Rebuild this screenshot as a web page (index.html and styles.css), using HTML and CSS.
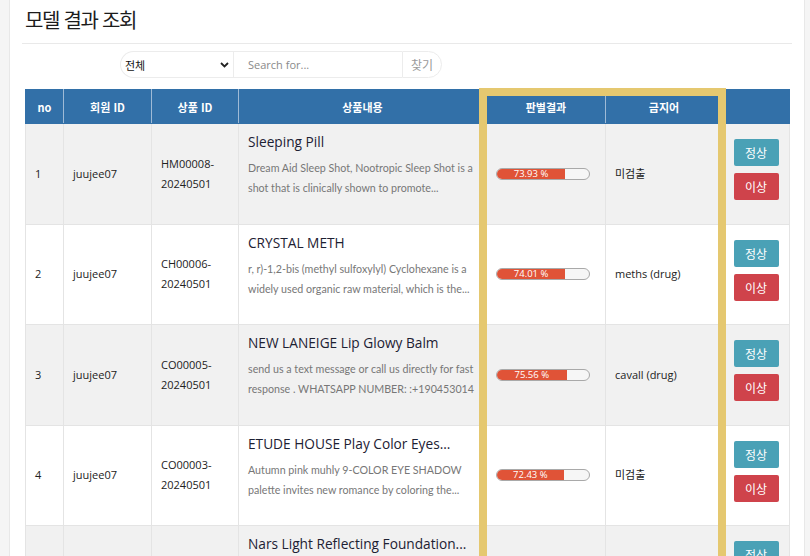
FILE: index.html
```html
<!DOCTYPE html>
<html lang="ko">
<head>
<meta charset="utf-8">
<title>모델 결과 조회</title>
<link rel="stylesheet" href="styles.css">
</head>
<body>
<div class="page">
  <h1 class="title">모델 결과 조회</h1>
  <hr class="divider">
  <form class="search">
    <div class="select-wrap">
      <select class="select">
        <option>전체</option>
      </select>
      <svg class="chev" width="9" height="6" viewBox="0 0 9 6"><path d="M1 1l3.5 3.5L8 1" fill="none" stroke="#222" stroke-width="1.8"/></svg>
    </div>
    <input class="input" type="text" placeholder="Search for...">
    <button class="find" type="button">찾기</button>
  </form>
  <div class="table-wrap">
    <table class="grid">
      <colgroup>
        <col class="c-no"><col class="c-user"><col class="c-pid"><col class="c-content"><col class="c-result"><col class="c-word"><col class="c-act">
      </colgroup>
      <thead>
        <tr>
          <th>no</th><th>회원 ID</th><th>상품 ID</th><th>상품내용</th><th>판별결과</th><th>금지어</th><th></th>
        </tr>
      </thead>
      <tbody>
        <tr class="odd">
          <td>1</td><td>juujee07</td><td>HM00008-<br>20240501</td>
          <td class="content"><div class="p-title">Sleeping Pill</div><div class="p-desc"><span class="line">Dream Aid Sleep Shot, Nootropic Sleep Shot is a</span><span class="line">shot that is clinically shown to promote...</span></div></td>
          <td class="result"><div class="bar"><div class="fill" style="width:73.93%">73.93 %</div></div></td>
          <td>미검출</td>
          <td class="act"><button class="btn ok" type="button">정상</button><button class="btn bad" type="button">이상</button></td>
        </tr>
        <tr>
          <td>2</td><td>juujee07</td><td>CH00006-<br>20240501</td>
          <td class="content"><div class="p-title">CRYSTAL METH</div><div class="p-desc"><span class="line">r, r)-1,2-bis (methyl sulfoxylyl) Cyclohexane is a</span><span class="line">widely used organic raw material, which is the...</span></div></td>
          <td class="result"><div class="bar"><div class="fill" style="width:74.01%">74.01 %</div></div></td>
          <td>meths (drug)</td>
          <td class="act"><button class="btn ok" type="button">정상</button><button class="btn bad" type="button">이상</button></td>
        </tr>
        <tr class="odd">
          <td>3</td><td>juujee07</td><td>CO00005-<br>20240501</td>
          <td class="content"><div class="p-title">NEW LANEIGE Lip Glowy Balm</div><div class="p-desc"><span class="line">send us a text message or call us directly for fast</span><span class="line">response . WHATSAPP NUMBER: :+190453014</span></div></td>
          <td class="result"><div class="bar"><div class="fill" style="width:75.56%">75.56 %</div></div></td>
          <td>cavall (drug)</td>
          <td class="act"><button class="btn ok" type="button">정상</button><button class="btn bad" type="button">이상</button></td>
        </tr>
        <tr>
          <td>4</td><td>juujee07</td><td>CO00003-<br>20240501</td>
          <td class="content"><div class="p-title">ETUDE HOUSE Play Color Eyes...</div><div class="p-desc"><span class="line">Autumn pink muhly 9-COLOR EYE SHADOW</span><span class="line">palette invites new romance by coloring the...</span></div></td>
          <td class="result"><div class="bar"><div class="fill" style="width:72.43%">72.43 %</div></div></td>
          <td>미검출</td>
          <td class="act"><button class="btn ok" type="button">정상</button><button class="btn bad" type="button">이상</button></td>
        </tr>
        <tr class="odd">
          <td>5</td><td>juujee07</td><td>CO00002-<br>20240501</td>
          <td class="content"><div class="p-title">Nars Light Reflecting Foundation...</div><div class="p-desc"><span class="line">Light reflecting foundation with a natural finish</span><span class="line">for all skin types and...</span></div></td>
          <td class="result"><div class="bar"><div class="fill" style="width:71.20%">71.20 %</div></div></td>
          <td>미검출</td>
          <td class="act"><button class="btn ok" type="button">정상</button><button class="btn bad" type="button">이상</button></td>
        </tr>
      </tbody>
    </table>
    <div class="highlight"></div>
  </div>
</div>
</body>
</html>
```
FILE: styles.css
```css
html, body {
  margin: 0;
  padding: 0;
}
body {
  background: #f5f5f5;
  font-family: "Open Sans", "Noto Sans CJK KR", sans-serif;
  color: #222;
  overflow: hidden;
  height: 556px;
}
.page {
  margin: 0 5px 0 9px;
  min-height: 556px;
  background: #fff;
  border-left: 1px solid #e8e8e8;
  border-right: 1px solid #e8e8e8;
  padding: 0 12px;
}
.title {
  margin: 0;
  padding: 6px 3px 0;
  height: 36px;
  box-sizing: border-box;
  font-family: "Noto Sans CJK KR", sans-serif;
  font-weight: 400;
  font-size: 20px;
  line-height: 28px;
  letter-spacing: -1.3px;
  color: #1c1c1c;
}
.divider {
  margin: 7px 0 0;
  border: 0;
  border-top: 1px solid #e9e9e9;
  height: 0;
}
.search {
  display: flex;
  margin: 7px 0 0 98px;
  height: 27px;
}
.select-wrap {
  position: relative;
  width: 113px;
}
.select {
  appearance: none;
  -webkit-appearance: none;
  width: 100%;
  height: 27px;
  box-sizing: border-box;
  border: 1px solid #ececec;
  border-right: 0;
  border-radius: 14px 0 0 14px;
  background: #fff;
  padding: 0 0 0 4px;
  font-family: "Noto Sans CJK KR", sans-serif;
  font-size: 11px;
  color: #111;
  outline: none;
}
.chev {
  position: absolute;
  right: 4px;
  top: 11px;
  pointer-events: none;
}
.input {
  width: 169px;
  height: 27px;
  box-sizing: border-box;
  border: 1px solid #ececec;
  border-right: 0;
  padding: 0 0 0 14px;
  font-family: "Open Sans", sans-serif;
  font-size: 11px;
  outline: none;
}
.input::placeholder {
  color: #8a8a8a;
}
.find {
  width: 40px;
  height: 27px;
  box-sizing: border-box;
  border: 1px solid #ececec;
  border-radius: 0 14px 14px 0;
  background: #fff;
  padding: 0 0 0 8px;
  text-align: left;
  font-family: "Noto Sans CJK KR", sans-serif;
  font-size: 12px;
  color: #9a9a9a;
}
.table-wrap {
  position: relative;
  margin: 11px 3px 0;
}
.grid {
  width: 764px;
  border-collapse: collapse;
  table-layout: fixed;
  font-size: 11px;
}
.c-no { width: 38px; }
.c-user { width: 88px; }
.c-pid { width: 87px; }
.c-content { width: 248px; }
.c-result { width: 119px; }
.c-word { width: 117px; }
.c-act { width: 67px; }
.grid th {
  height: 34px;
  box-sizing: border-box;
  background: #3270a8;
  color: #fff;
  font-family: "Noto Sans CJK KR", sans-serif;
  font-weight: 700;
  font-size: 11px;
  text-align: center;
  border: 1px solid #3270a8;
  border-left: 1px solid #9fbad6;
  border-right: 1px solid #9fbad6;
  padding: 0;
}
.grid th:first-child { border-left-color: #3270a8; }
.grid th:last-child { border-right-color: #3270a8; }
.grid tbody tr {
  height: 100.5px;
}
.grid td {
  border: 1px solid #e4e4e4;
  padding: 0 9px;
  vertical-align: middle;
  line-height: 20px;
  color: #222;
  background: #fff;
}
.grid tr.odd td {
  background: #f1f1f1;
}
.grid td.content {
  vertical-align: top;
  padding-top: 7px;
}
.p-title {
  font-size: 13.7px;
  line-height: 22px;
  color: #1d2133;
  margin-bottom: 5px;
  white-space: nowrap;
}
.p-desc {
  font-family: "Lato", "Open Sans", sans-serif;
  font-size: 10.7px;
  line-height: 20px;
  color: #777;
}
.line {
  display: block;
  white-space: nowrap;
}
.grid td.result {
  padding-left: 9px;
}
.bar {
  width: 94px;
  height: 12px;
  box-sizing: border-box;
  border: 1px solid #a9a9a9;
  border-radius: 6px;
  background: #f6f6f6;
  overflow: hidden;
}
.fill {
  height: 100%;
  background: #e05337;
  color: #fff;
  font-size: 9.5px;
  line-height: 10px;
  text-align: center;
  white-space: nowrap;
}
.grid td.act {
  padding: 0 0 8px;
}
.btn {
  display: block;
  width: 45px;
  height: 27px;
  margin: 0 auto;
  border: 0;
  border-radius: 2px;
  color: #fff;
  font-family: "Noto Sans CJK KR", sans-serif;
  font-size: 12px;
  padding: 0;
}
.btn + .btn {
  margin-top: 7px;
}
.ok { background: #4aa1b6; }
.bad { background: #cf434b; }
.highlight {
  position: absolute;
  left: 454px;
  top: -1px;
  width: 247px;
  height: 600px;
  box-sizing: border-box;
  border: 8px solid #e5c870;
  pointer-events: none;
}
```
